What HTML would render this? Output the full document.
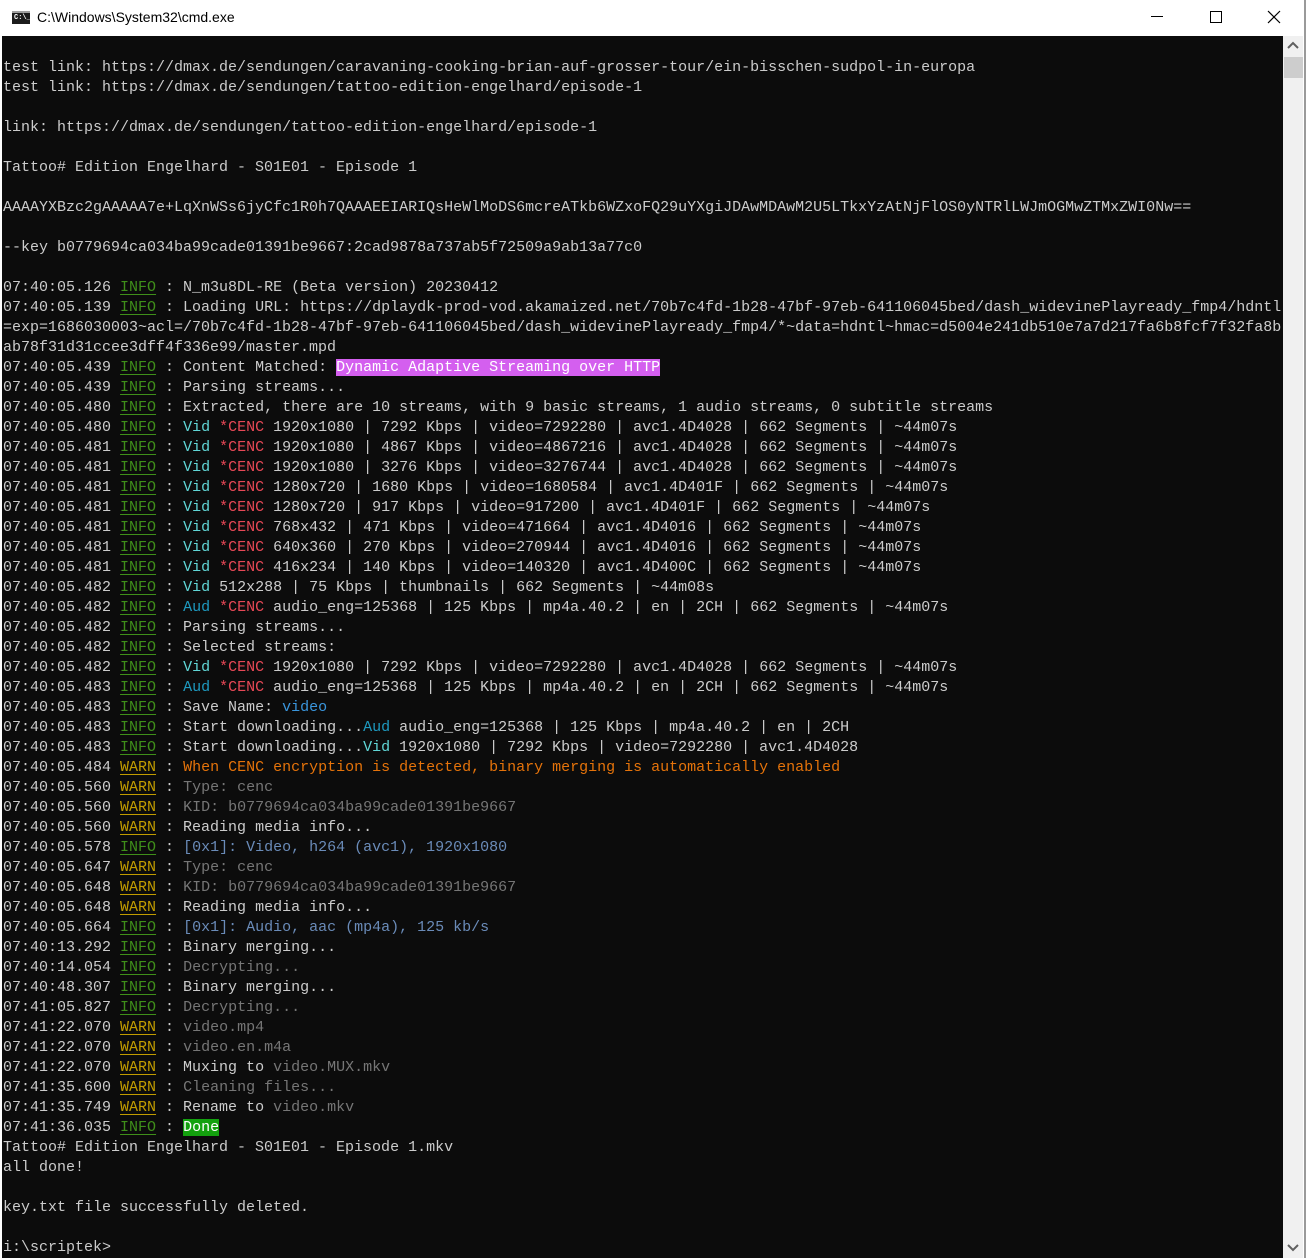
<!DOCTYPE html>
<html><head><meta charset="utf-8"><style>
html,body{margin:0;padding:0;width:1306px;height:1258px;overflow:hidden;background:#fff;}
.title{position:absolute;left:0;top:0;width:1306px;height:36px;background:#fff;font-family:"Liberation Sans",sans-serif;font-size:14px;color:#000;}
.title .t{position:absolute;left:37px;top:9px;}
.icon{position:absolute;left:12px;top:11px;width:18px;height:13px;background:#1c1c1c;border-top:2px solid #a0a0a0;box-sizing:border-box;}
.icon span{position:absolute;left:2px;top:1px;font-size:7px;color:#fff;font-family:"Liberation Mono",monospace;font-weight:bold;line-height:9px;}
.term{position:absolute;left:2px;top:36px;width:1281px;height:1222px;background:#0c0c0c;}
.scroll{position:absolute;left:1283px;top:36px;width:20px;height:1222px;background:#f0f0f0;}
.thumb{position:absolute;left:1284px;top:57px;width:19px;height:21px;background:#cdcdcd;}
.rb{position:absolute;left:1304px;top:0;width:2px;height:1258px;background:#9a9a9a;}
pre{position:absolute;left:3px;top:58px;margin:0;font-family:"Liberation Mono",monospace;font-size:15px;line-height:20px;color:#cccccc;white-space:pre;}
.i{color:#3f8f1a;text-decoration:underline;text-underline-offset:3px;}
.w{color:#c19c00;text-decoration:underline;text-underline-offset:3px;}
.v{color:#61d6d6;}
.a{color:#1e9ac0;}
.c{color:#e74856;}
.g{color:#767676;}
.o{color:#e5730a;}
.b{color:#3a96dd;}
.s{color:#6a8bb8;}
.m{background:#d45fef;color:#fff;}
.d{background:#13a10e;color:#fff;}
</style></head><body>
<div class="title"><div class="icon"><span>C:\_</span></div><div class="t">C:\Windows\System32\cmd.exe</div>
<svg style="position:absolute;left:1150px;top:10px" width="140" height="16"><line x1="1" y1="6.5" x2="13" y2="6.5" stroke="#000" stroke-width="1"/><rect x="60.5" y="1.5" width="11" height="11" fill="none" stroke="#000"/><path d="M118 1 L130 13 M130 1 L118 13" stroke="#000" stroke-width="1.2"/></svg></div>
<div class="term"></div>
<div class="scroll"></div><div class="thumb"></div><div class="rb"></div>
<svg style="position:absolute;left:1286px;top:40px" width="14" height="12"><path d="M2 8 L7 3 L12 8" fill="none" stroke="#606060" stroke-width="2"/></svg>
<svg style="position:absolute;left:1286px;top:1242px" width="14" height="12"><path d="M2 3 L7 8 L12 3" fill="none" stroke="#606060" stroke-width="2"/></svg>
<pre>
test link: https://dmax.de/sendungen/caravaning-cooking-brian-auf-grosser-tour/ein-bisschen-sudpol-in-europa
test link: https://dmax.de/sendungen/tattoo-edition-engelhard/episode-1

link: https://dmax.de/sendungen/tattoo-edition-engelhard/episode-1

Tattoo# Edition Engelhard - S01E01 - Episode 1

AAAAYXBzc2gAAAAA7e+LqXnWSs6jyCfc1R0h7QAAAEEIARIQsHeWlMoDS6mcreATkb6WZxoFQ29uYXgiJDAwMDAwM2U5LTkxYzAtNjFlOS0yNTRlLWJmOGMwZTMxZWI0Nw==

--key b0779694ca034ba99cade01391be9667:2cad9878a737ab5f72509a9ab13a77c0

07:40:05.126 <span class="i">INFO</span> : N_m3u8DL-RE (Beta version) 20230412
07:40:05.139 <span class="i">INFO</span> : Loading URL: https://dplaydk-prod-vod.akamaized.net/70b7c4fd-1b28-47bf-97eb-641106045bed/dash_widevinePlayready_fmp4/hdntl
=exp=1686030003~acl=/70b7c4fd-1b28-47bf-97eb-641106045bed/dash_widevinePlayready_fmp4/*~data=hdntl~hmac=d5004e241db510e7a7d217fa6b8fcf7f32fa8b
ab78f31d31ccee3dff4f336e99/master.mpd
07:40:05.439 <span class="i">INFO</span> : Content Matched: <span class="m">Dynamic Adaptive Streaming over HTTP</span>
07:40:05.439 <span class="i">INFO</span> : Parsing streams...
07:40:05.480 <span class="i">INFO</span> : Extracted, there are 10 streams, with 9 basic streams, 1 audio streams, 0 subtitle streams
07:40:05.480 <span class="i">INFO</span> : <span class="v">Vid</span> <span class="c">*CENC</span> 1920x1080 | 7292 Kbps | video=7292280 | avc1.4D4028 | 662 Segments | ~44m07s
07:40:05.481 <span class="i">INFO</span> : <span class="v">Vid</span> <span class="c">*CENC</span> 1920x1080 | 4867 Kbps | video=4867216 | avc1.4D4028 | 662 Segments | ~44m07s
07:40:05.481 <span class="i">INFO</span> : <span class="v">Vid</span> <span class="c">*CENC</span> 1920x1080 | 3276 Kbps | video=3276744 | avc1.4D4028 | 662 Segments | ~44m07s
07:40:05.481 <span class="i">INFO</span> : <span class="v">Vid</span> <span class="c">*CENC</span> 1280x720 | 1680 Kbps | video=1680584 | avc1.4D401F | 662 Segments | ~44m07s
07:40:05.481 <span class="i">INFO</span> : <span class="v">Vid</span> <span class="c">*CENC</span> 1280x720 | 917 Kbps | video=917200 | avc1.4D401F | 662 Segments | ~44m07s
07:40:05.481 <span class="i">INFO</span> : <span class="v">Vid</span> <span class="c">*CENC</span> 768x432 | 471 Kbps | video=471664 | avc1.4D4016 | 662 Segments | ~44m07s
07:40:05.481 <span class="i">INFO</span> : <span class="v">Vid</span> <span class="c">*CENC</span> 640x360 | 270 Kbps | video=270944 | avc1.4D4016 | 662 Segments | ~44m07s
07:40:05.481 <span class="i">INFO</span> : <span class="v">Vid</span> <span class="c">*CENC</span> 416x234 | 140 Kbps | video=140320 | avc1.4D400C | 662 Segments | ~44m07s
07:40:05.482 <span class="i">INFO</span> : <span class="v">Vid</span> 512x288 | 75 Kbps | thumbnails | 662 Segments | ~44m08s
07:40:05.482 <span class="i">INFO</span> : <span class="a">Aud</span> <span class="c">*CENC</span> audio_eng=125368 | 125 Kbps | mp4a.40.2 | en | 2CH | 662 Segments | ~44m07s
07:40:05.482 <span class="i">INFO</span> : Parsing streams...
07:40:05.482 <span class="i">INFO</span> : Selected streams:
07:40:05.482 <span class="i">INFO</span> : <span class="v">Vid</span> <span class="c">*CENC</span> 1920x1080 | 7292 Kbps | video=7292280 | avc1.4D4028 | 662 Segments | ~44m07s
07:40:05.483 <span class="i">INFO</span> : <span class="a">Aud</span> <span class="c">*CENC</span> audio_eng=125368 | 125 Kbps | mp4a.40.2 | en | 2CH | 662 Segments | ~44m07s
07:40:05.483 <span class="i">INFO</span> : Save Name: <span class="b">video</span>
07:40:05.483 <span class="i">INFO</span> : Start downloading...<span class="a">Aud</span> audio_eng=125368 | 125 Kbps | mp4a.40.2 | en | 2CH
07:40:05.483 <span class="i">INFO</span> : Start downloading...<span class="v">Vid</span> 1920x1080 | 7292 Kbps | video=7292280 | avc1.4D4028
07:40:05.484 <span class="w">WARN</span> : <span class="o">When CENC encryption is detected, binary merging is automatically enabled</span>
07:40:05.560 <span class="w">WARN</span> : <span class="g">Type: cenc</span>
07:40:05.560 <span class="w">WARN</span> : <span class="g">KID: b0779694ca034ba99cade01391be9667</span>
07:40:05.560 <span class="w">WARN</span> : Reading media info...
07:40:05.578 <span class="i">INFO</span> : <span class="s">[0x1]: Video, h264 (avc1), 1920x1080</span>
07:40:05.647 <span class="w">WARN</span> : <span class="g">Type: cenc</span>
07:40:05.648 <span class="w">WARN</span> : <span class="g">KID: b0779694ca034ba99cade01391be9667</span>
07:40:05.648 <span class="w">WARN</span> : Reading media info...
07:40:05.664 <span class="i">INFO</span> : <span class="s">[0x1]: Audio, aac (mp4a), 125 kb/s</span>
07:40:13.292 <span class="i">INFO</span> : Binary merging...
07:40:14.054 <span class="i">INFO</span> : <span class="g">Decrypting...</span>
07:40:48.307 <span class="i">INFO</span> : Binary merging...
07:41:05.827 <span class="i">INFO</span> : <span class="g">Decrypting...</span>
07:41:22.070 <span class="w">WARN</span> : <span class="g">video.mp4</span>
07:41:22.070 <span class="w">WARN</span> : <span class="g">video.en.m4a</span>
07:41:22.070 <span class="w">WARN</span> : Muxing to <span class="g">video.MUX.mkv</span>
07:41:35.600 <span class="w">WARN</span> : <span class="g">Cleaning files...</span>
07:41:35.749 <span class="w">WARN</span> : Rename to <span class="g">video.mkv</span>
07:41:36.035 <span class="i">INFO</span> : <span class="d">Done</span>
Tattoo# Edition Engelhard - S01E01 - Episode 1.mkv
all done!

key.txt file successfully deleted.

i:\scriptek&gt;
</pre>
</body></html>
